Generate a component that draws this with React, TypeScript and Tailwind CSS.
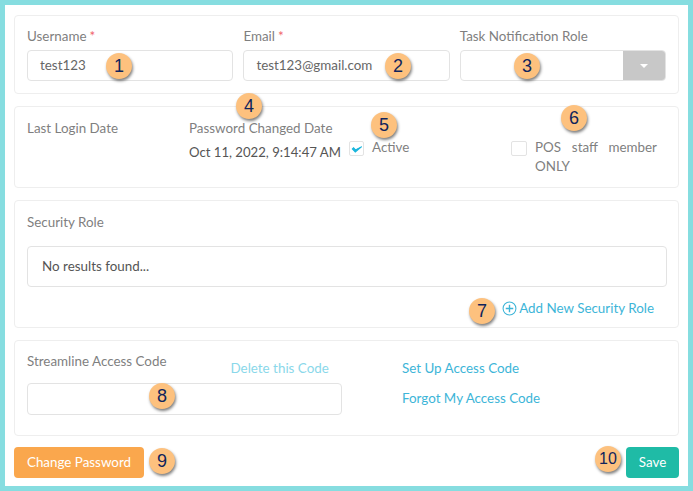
import React from "react";

function Badge({ n, x, y }: { n: number; x: number; y: number }) {
  return (
    <div
      className={`absolute flex h-[26px] w-[26px] items-center justify-center rounded-full bg-[#fdc17e] leading-none text-[#10245c] shadow-[1px_2px_3px_rgba(0,0,0,0.5)] [font-family:'Liberation_Sans',sans-serif] ${n === 10 ? "text-[16px]" : "text-[18px]"}`}
      style={{ left: x - 13, top: y - 13 }}
    >
      {n}
    </div>
  );
}

function Field({ label, required, value }: { label: string; required?: boolean; value: string }) {
  return (
    <div className="flex w-[206.4px] flex-col">
      <div className="h-[22px] leading-[17px] text-[#7f7f7f]">
        {label}
        {required && <span className="ml-[3px] text-[#f0646c]">*</span>}
      </div>
      <div className="flex h-[31px] items-center rounded-[4px] border border-[#e3e3e3] px-3 text-[#666]">
        {value}
      </div>
    </div>
  );
}

const card = "rounded-[4px] border border-[#eeeeee] bg-white";

export default function App() {
  return (
    <div className="relative h-[491px] w-[693px] overflow-hidden border-[5px] border-[#86dde0] bg-white px-[9px] pt-[10px] text-[13.4px] [font-family:Lato,sans-serif]">
      <div className="flex flex-col gap-[12px]">
        <div className={`${card} flex h-[79px] gap-[10px] pl-[12px] pt-[12px]`}>
          <Field label="Username" required value="test123" />
          <Field label="Email" required value="test123@gmail.com" />
          <div className="flex w-[206.4px] flex-col">
            <div className="h-[22px] leading-[17px] text-[#7f7f7f]">Task Notification Role</div>
            <div className="flex h-[31px] overflow-hidden rounded-[4px] border border-[#e3e3e3]">
              <div className="flex-1" />
              <div className="flex w-[42px] items-center justify-center bg-[#c8c8c8]">
                <div className="h-0 w-0 border-x-[4px] border-t-[4px] border-x-transparent border-t-white" />
              </div>
            </div>
          </div>
        </div>

        <div className={`${card} flex h-[82px] pl-[12px] pt-[13px]`}>
          <div className="w-[162px] leading-[17px] text-[#7f7f7f]">Last Login Date</div>
          <div className="flex w-[160px] flex-col">
            <div className="leading-[17px] text-[#7f7f7f]">Password Changed Date</div>
            <div className="mt-[7px] whitespace-nowrap text-[13.15px] leading-[17px] text-[#555]">
              Oct 11, 2022, 9:14:47 AM
            </div>
          </div>
          <div className="flex w-[162px] items-start pt-[21px]">
            <div className="flex h-[15px] w-[15px] items-center justify-center rounded-[2px] border border-[#e3e3e3]">
              <svg viewBox="0 0 14 14" className="h-[12px] w-[12px]">
                <path d="M1.5 7 L5 10.5 L12.5 4.2 L5.2 8 L3 5.5 Z" fill="#19b5dc" stroke="#19b5dc" strokeWidth="1.2" />
              </svg>
            </div>
            <span className="ml-[8px] mt-[-2px] leading-[17px] text-[#7f7f7f]">Active</span>
          </div>
          <div className="flex items-start pt-[21px]">
            <div className="h-[15px] w-[16px] rounded-[2px] border border-[#e3e3e3]" />
            <div className="ml-[8px] mt-[-3px] w-[122px] text-justify leading-[19px] text-[#7f7f7f]">
              POS staff member ONLY
            </div>
          </div>
        </div>

        <div className={`${card} h-[128px] pl-[12px] pr-[11px] pt-[13px]`}>
          <div className="leading-[17px] text-[#7f7f7f]">Security Role</div>
          <div className="mt-[15px] flex h-[41px] items-center rounded-[4px] border border-[#e3e3e3] px-[14px] text-[#555]">
            No results found...
          </div>
          <div className="mt-[13px] flex items-center justify-end gap-[2px] pr-[13px] leading-[17px] text-[#3db5d8]">
            <svg viewBox="0 0 14 14" className="h-[15px] w-[15px]">
              <circle cx="7" cy="7" r="6" fill="none" stroke="#3db5d8" strokeWidth="1" />
              <path d="M7 3.5 V10.5 M3.5 7 H10.5" stroke="#3db5d8" strokeWidth="1.3" />
            </svg>
            Add New Security Role
          </div>
        </div>

        <div className={`${card} flex h-[96px] pl-[12px] pt-[12px]`}>
          <div className="flex w-[375px] flex-col">
            <div className="flex h-[30px] items-start">
              <span className="leading-[17px] text-[#7f7f7f]">Streamline Access Code</span>
              <span className="ml-[64px] mt-[7px] leading-[17px] text-[#8ad8ea]">Delete this Code</span>
            </div>
            <div className="h-[32px] w-[315px] rounded-[4px] border border-[#e3e3e3]" />
          </div>
          <div className="flex flex-col gap-[13px] pt-[7px] leading-[17px] text-[#3db5d8]">
            <span>Set Up Access Code</span>
            <span>Forgot My Access Code</span>
          </div>
        </div>
      </div>

      <div className="mt-[11px] flex items-center justify-between">
        <button className="h-[31px] w-[130px] rounded-[4px] bg-[#faa74d] text-center text-white">
          Change Password
        </button>
        <button className="h-[31px] w-[53px] rounded-[4px] bg-[#1fbba6] text-center text-white">
          Save
        </button>
      </div>

      <Badge n={1} x={114} y={61} />
      <Badge n={2} x={393} y={61} />
      <Badge n={3} x={522} y={61} />
      <Badge n={4} x={244} y={101} />
      <Badge n={5} x={379} y={120} />
      <Badge n={6} x={569} y={113} />
      <Badge n={7} x={477} y={306} />
      <Badge n={8} x={157} y={391} />
      <Badge n={9} x={157} y={456} />
      <Badge n={10} x={603} y={454} />
    </div>
  );
}
